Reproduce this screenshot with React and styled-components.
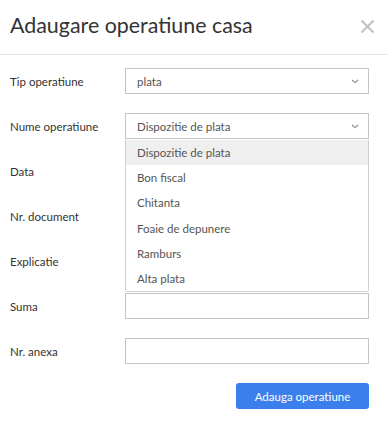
import React from "react";
import styled, { createGlobalStyle } from "styled-components";

const Global = createGlobalStyle`
  html, body { margin: 0; padding: 0; background: #fff; }
  body { font-family: Lato, "Open Sans", sans-serif; color: #333; }
  * { box-sizing: border-box; }
`;

const Modal = styled.div`
  width: 388px;
  height: 422px;
  background: #fff;
`;

const Header = styled.div`
  height: 55px;
  border-bottom: 1px solid #e5e5e5;
  display: flex;
  align-items: center;
  justify-content: space-between;
  padding: 0 12px 2px 10px;
`;

const Title = styled.h4`
  margin: 0;
  font-size: 21.4px;
  font-weight: 400;
  color: #333;
  line-height: 1.1;
`;

const Close = styled.button`
  border: 0;
  background: none;
  padding: 0;
  width: 18px;
  height: 18px;
  display: flex;
  align-items: center;
  justify-content: center;
  cursor: pointer;
`;

const Form = styled.div`
  padding: 13px 19px 0 10px;
  display: flex;
  flex-direction: column;
  gap: 19px;
`;

const Row = styled.div`
  display: flex;
  align-items: center;
  height: 26px;
`;

const Label = styled.label`
  width: 115px;
  font-size: 11.5px;
  color: #333;
`;

const Control = styled.div`
  position: relative;
  flex: 1;
  height: 26px;
`;

const SelectBox = styled.div`
  height: 26px;
  border: 1px solid #c4c4c4;
  background: #fff;
  display: flex;
  align-items: center;
  justify-content: space-between;
  padding: 0 9px 0 11px;
  font-size: 11.5px;
  color: #555;
`;

const Input = styled.div`
  height: 26px;
  border: 1px solid #c4c4c4;
  background: #fff;
`;

const Menu = styled.ul`
  position: absolute;
  left: 0;
  right: 0;
  top: calc(100% + 1px);
  margin: 0;
  padding: 0;
  list-style: none;
  background: #fff;
  border: 1px solid #d0d0d0;
  border-top: none;
  border-radius: 0 0 3px 3px;
  z-index: 2;
`;

const Item = styled.li`
  height: 25.2px;
  display: flex;
  align-items: center;
  padding-left: 11px;
  font-size: 11.5px;
  color: #555;
  background: ${(p) => (p.$active ? "#efefef" : "#fff")};
`;

const Footer = styled.div`
  display: flex;
  justify-content: flex-end;
`;

const Button = styled.button`
  height: 26px;
  width: 133px;
  border: 0;
  border-radius: 3px;
  background: #3a7fec;
  color: #fff;
  font-family: inherit;
  font-size: 11.5px;
  padding: 0;
`;

const Chevron = () => (
  <svg width="8" height="5" viewBox="0 0 8 5">
    <path d="M1 1l3 2.6L7 1" fill="none" stroke="#888" strokeWidth="1.1" />
  </svg>
);

const options = [
  "Dispozitie de plata",
  "Bon fiscal",
  "Chitanta",
  "Foaie de depunere",
  "Ramburs",
  "Alta plata",
];

export default function App() {
  return (
    <Modal>
      <Global />
      <Header>
        <Title>Adaugare operatiune casa</Title>
        <Close aria-label="close">
          <svg width="15" height="15" viewBox="0 0 15 15">
            <path d="M1.5 1.5l12 12M13.5 1.5l-12 12" stroke="#c2c2c2" strokeWidth="2.2" />
          </svg>
        </Close>
      </Header>
      <Form>
        <Row>
          <Label>Tip operatiune</Label>
          <Control>
            <SelectBox>
              plata
              <Chevron />
            </SelectBox>
          </Control>
        </Row>
        <Row>
          <Label>Nume operatiune</Label>
          <Control>
            <SelectBox>
              Dispozitie de plata
              <Chevron />
            </SelectBox>
            <Menu>
              {options.map((o, i) => (
                <Item key={o} $active={i === 0}>
                  {o}
                </Item>
              ))}
            </Menu>
          </Control>
        </Row>
        <Row>
          <Label>Data</Label>
          <Control>
            <Input />
          </Control>
        </Row>
        <Row>
          <Label>Nr. document</Label>
          <Control>
            <Input />
          </Control>
        </Row>
        <Row>
          <Label>Explicatie</Label>
          <Control>
            <Input />
          </Control>
        </Row>
        <Row>
          <Label>Suma</Label>
          <Control>
            <Input />
          </Control>
        </Row>
        <Row>
          <Label>Nr. anexa</Label>
          <Control>
            <Input />
          </Control>
        </Row>
        <Footer>
          <Button>Adauga operatiune</Button>
        </Footer>
      </Form>
    </Modal>
  );
}
